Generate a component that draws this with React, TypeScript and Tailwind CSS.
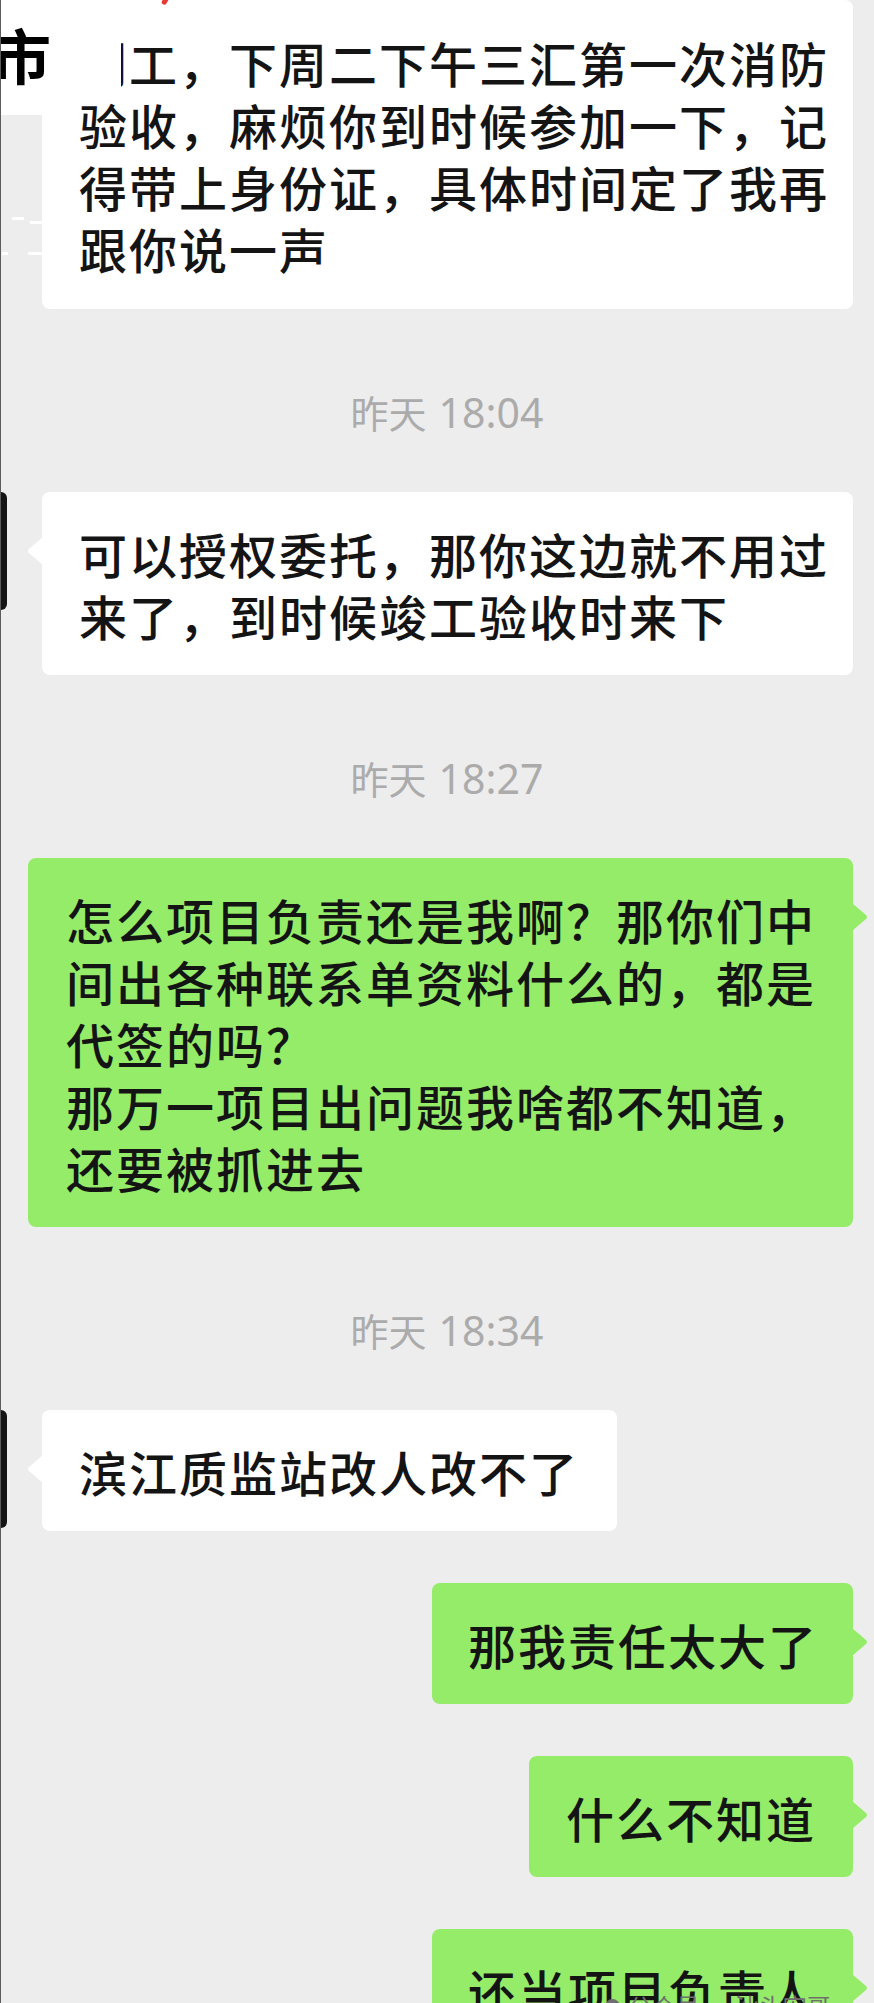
import React from "react";

function Tail({ side, color }: { side: "left" | "right"; color: string }) {
  if (side === "left") {
    return (
      <svg className="absolute left-[-15px] top-[45px]" width="16" height="28" viewBox="0 0 16 28">
        <path d="M16 0 L2 12 Q0 14 2 16 L16 28 Z" fill={color} />
      </svg>
    );
  }
  return (
    <svg className="absolute right-[-15px] top-[45px]" width="16" height="28" viewBox="0 0 16 28">
      <path d="M0 0 L14 12 Q16 14 14 16 L0 28 Z" fill={color} />
    </svg>
  );
}

function Lines({ lines }: { lines: string[] }) {
  return (
    <>
      {lines.map((l, i) => (
        <p key={i} className="whitespace-nowrap">
          {l}
        </p>
      ))}
    </>
  );
}

function Avatar() {
  return <div className="w-[7px] h-[118px] shrink-0 bg-[#141414] rounded-r-[6px]" />;
}

function Stamp({ day, time }: { day: string; time: string }) {
  return (
    <div className="mt-[83px] h-[40px] flex items-center justify-center pl-[20px] text-[#ABABAB]">
      <span className="text-[38px] leading-[40px]">{day}</span>
      <span className="ml-[12px] text-[41px] leading-[40px] font-['Noto_Sans',sans-serif]">{time}</span>
    </div>
  );
}

const bubbleText = "text-[48px] leading-[62px] tracking-[2px] font-medium text-[#141414]";

export default function App() {
  return (
    <div className="relative w-[874px] h-[2003px] overflow-hidden bg-[#EDEDED] font-['Noto_Sans_CJK_SC','Noto_Sans',sans-serif]">
      <div className="flex flex-col">
        {/* bubble 1 */}
        <div className="flex">
          <div className={`ml-[42px] relative bg-white rounded-[8px] pt-[31px] pb-[30px] pl-[37px] pr-[24px] ${bubbleText}`}>
            <Lines
              lines={[
                "刘工，下周二下午三汇第一次消防",
                "验收，麻烦你到时候参加一下，记",
                "得带上身份证，具体时间定了我再",
                "跟你说一声",
              ]}
            />
          </div>
        </div>

        <Stamp day="昨天" time="18:04" />

        {/* bubble 2 */}
        <div className="mt-[60px] flex items-start">
          <Avatar />
          <div className={`ml-[35px] relative bg-white rounded-[8px] pt-[30px] pb-[29px] pl-[37px] pr-[24px] ${bubbleText}`}>
            <Tail side="left" color="#FFFFFF" />
            <Lines lines={["可以授权委托，那你这边就不用过", "来了，到时候竣工验收时来下"]} />
          </div>
        </div>

        <Stamp day="昨天" time="18:27" />

        {/* bubble 3 */}
        <div className="mt-[60px] flex justify-end pr-[21px]">
          <div className={`relative bg-[#95EC69] rounded-[8px] pt-[30px] pb-[29px] pl-[38px] pr-[37px] ${bubbleText}`}>
            <Tail side="right" color="#95EC69" />
            <Lines
              lines={[
                "怎么项目负责还是我啊？那你们中",
                "间出各种联系单资料什么的，都是",
                "代签的吗？",
                "那万一项目出问题我啥都不知道，",
                "还要被抓进去",
              ]}
            />
          </div>
        </div>

        <Stamp day="昨天" time="18:34" />

        {/* bubble 4 */}
        <div className="mt-[60px] flex items-start">
          <Avatar />
          <div className={`ml-[35px] relative bg-white rounded-[8px] pt-[30px] pb-[29px] pl-[37px] pr-[38px] ${bubbleText}`}>
            <Tail side="left" color="#FFFFFF" />
            <Lines lines={["滨江质监站改人改不了"]} />
          </div>
        </div>

        {/* bubble 5 */}
        <div className="mt-[52px] flex justify-end pr-[21px]">
          <div className={`relative bg-[#95EC69] rounded-[8px] pt-[30px] pb-[29px] pl-[36px] pr-[35px] ${bubbleText}`}>
            <Tail side="right" color="#95EC69" />
            <Lines lines={["那我责任太大了"]} />
          </div>
        </div>

        {/* bubble 6 */}
        <div className="mt-[52px] flex justify-end pr-[21px]">
          <div className={`relative bg-[#95EC69] rounded-[8px] pt-[30px] pb-[29px] pl-[37px] pr-[37px] ${bubbleText}`}>
            <Tail side="right" color="#95EC69" />
            <Lines lines={["什么不知道"]} />
          </div>
        </div>

        {/* bubble 7 */}
        <div className="mt-[52px] flex justify-end pr-[21px]">
          <div className={`relative bg-[#95EC69] rounded-[8px] pt-[30px] pb-[29px] pl-[36px] pr-[35px] ${bubbleText}`}>
            <Tail side="right" color="#95EC69" />
            <Lines lines={["还当项目负责人"]} />
          </div>
        </div>
      </div>

      {/* top-left overlay with cropped title */}
      <div className="absolute left-0 top-0 w-[121px] h-[92px] bg-white" />
      <div className="absolute left-0 top-0 w-[42px] h-[115px] bg-white" />
      <div className="absolute left-[-9px] top-[24px] text-[60px] leading-[60px] font-bold text-black">市</div>

      {/* red mark at top */}
      <div className="absolute left-[163px] top-[-5px] w-[5px] h-[10px] bg-[#E53935] rotate-[30deg] rounded-sm" />

      {/* white speckles */}
      <div className="absolute left-[12px] top-[217px] w-[12px] h-[3px] bg-white" />
      <div className="absolute left-[30px] top-[221px] w-[12px] h-[3px] bg-white" />
      <div className="absolute left-[2px] top-[252px] w-[6px] h-[3px] bg-white" />
      <div className="absolute left-[28px] top-[252px] w-[14px] h-[3px] bg-white" />

      {/* left frame line */}
      <div className="absolute left-0 top-0 w-px h-full bg-[#5c5c5c]" />

      {/* watermark */}
      <div className="absolute left-[605px] top-[1994px] flex items-center gap-[8px] text-[24px] leading-[24px] text-[#6f6f6f]">
        <div className="w-[15px] h-[15px] rounded-full bg-[#6f6f6f]" />
        <span>公众号 · 汕头宏哥</span>
      </div>
    </div>
  );
}
